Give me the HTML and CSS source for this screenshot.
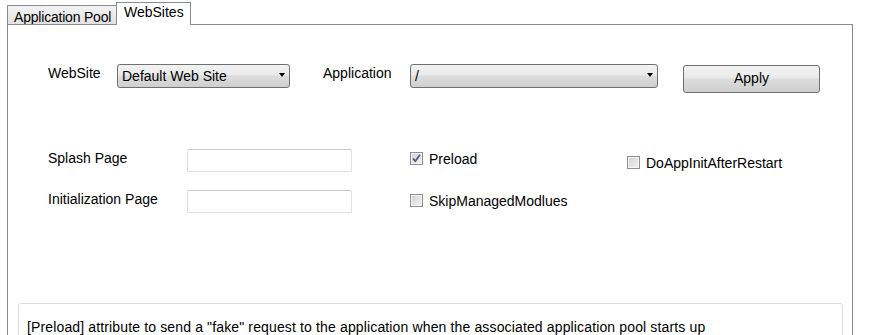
FILE: index.html
```html
<!DOCTYPE html>
<html lang="en">
<head>
    <meta charset="UTF-8">
    <title>Preload Settings</title>
    <link rel="stylesheet" href="styles.css">
</head>
<body>
    <div class="tabstrip">
        <div class="tab">Application Pool</div>
        <div class="tab tab-active">WebSites</div>
    </div>
    <div class="panel">
        <div class="top-row">
            <span class="label label-site">WebSite</span>
            <div class="combo combo-site">Default Web Site<span class="arrow"></span></div>
            <span class="label label-app">Application</span>
            <div class="combo combo-app">/<span class="arrow"></span></div>
            <button class="apply-button">Apply</button>
        </div>

        <div class="settings">
            <span class="label row-label">Splash Page</span>
            <input class="textbox" type="text">
            <label class="check check-first">
                <span class="box">
                    <svg width="11" height="11" viewBox="0 0 11 11"><path d="M2 5.5 L4.3 8 L9 1.8" fill="none" stroke="#4a5f86" stroke-width="1.8"/></svg>
                </span>
                Preload
            </label>
            <label class="check check-restart"><span class="box"></span>DoAppInitAfterRestart</label>

            <span class="label row-label">Initialization Page</span>
            <input class="textbox" type="text">
            <label class="check check-second"><span class="box"></span>SkipManagedModlues</label>
        </div>

        <div class="info-box">
            [Preload] attribute to send a "fake" request to the application when the associated application pool starts up
        </div>
    </div>
</body>
</html>
```

FILE: styles.css
```css
body {
    margin: 0;
    background-color: #ffffff;
    font-family: "Liberation Sans", Arial, sans-serif;
    font-size: 14px;
    line-height: 16px;
    color: #000000;
    overflow: hidden;
}
.tabstrip {
    display: flex;
    align-items: flex-end;
    padding: 2px 0 0 7px;
    height: 22px;
}
.tab {
    box-sizing: border-box;
    width: 109px;
    height: 19px;
    padding: 3px 0 0 6px;
    border: 1px solid #898c95;
    border-right: none;
    border-bottom: none;
    background: linear-gradient(#f3f3f3, #e2e2e2);
    white-space: nowrap;
    letter-spacing: -0.2px;
    overflow: hidden;
}
.tab-active {
    position: relative; /* sits over the panel's top line */
    z-index: 1;
    width: 75px;
    height: 23px;
    margin-bottom: -1px;
    padding: 1px 0 0 7px;
    border-right: 1px solid #898c95;
    background: #ffffff;
    letter-spacing: 0;
}
.panel {
    box-sizing: border-box;
    width: 846px;
    height: 400px;
    margin-left: 7px;
    padding-top: 39px;
    border: 1px solid #898c95;
    border-bottom: none;
}
.top-row {
    display: flex;
    align-items: flex-start;
    height: 29px;
}
.label {
    white-space: nowrap;
}
.label-site {
    width: 69px;
    margin: 1px 0 0 40px;
}
.label-app {
    width: 87px;
    margin: 1px 0 0 33px;
}
.combo {
    position: relative;
    box-sizing: border-box;
    height: 24px;
    padding: 3px 0 0 4px;
    border: 1px solid #707070;
    border-radius: 3px;
    background: linear-gradient(#f2f2f2 0%, #ebebeb 45%, #dddddd 50%, #cfcfcf 100%);
}
.combo-site {
    width: 173px;
}
.combo-app {
    width: 248px;
}
.arrow {
    position: absolute;
    right: 4px;
    top: 8px;
    width: 0;
    height: 0;
    border-left: 3.5px solid transparent;
    border-right: 3.5px solid transparent;
    border-top: 4px solid #000000;
}
.apply-button {
    box-sizing: border-box;
    width: 137px;
    height: 28px;
    margin: 1px 0 0 25px;
    padding: 4px 0 6px;
    border: 1px solid #707070;
    border-radius: 3px;
    background: linear-gradient(#f2f2f2 0%, #ebebeb 45%, #dddddd 50%, #cfcfcf 100%);
    font-family: inherit;
    font-size: 14px;
    line-height: 16px;
    color: #000000;
}
.settings {
    display: grid;
    grid-template-columns: 139px 223px 217px auto;
    grid-template-rows: 41px 41px;
    align-items: start;
    margin: 56px 0 0 40px;
}
.row-label {
    margin-top: 1px;
}
.textbox {
    box-sizing: border-box;
    width: 165px;
    height: 23px;
    margin: 0;
    border: 1px solid #dde1e6;
    border-top-color: #c5cad1;
    border-radius: 2px;
    font-family: inherit;
}
.check {
    display: flex;
    align-items: flex-start;
    gap: 6px;
    white-space: nowrap;
}
.check-first {
    margin-top: 2px;
}
.check-second {
    margin-top: 3px;
}
.check-restart {
    margin-top: 6px;
}
.box {
    box-sizing: border-box;
    display: flex;
    align-items: center;
    justify-content: center;
    width: 13px;
    height: 13px;
    margin-top: 1px;
    border: 1px solid #8e8f8f;
    box-shadow: inset 0 0 0 1px #f4f4f4;
    background: linear-gradient(135deg, #cdd0d5, #f4f4f4);
}
.info-box {
    box-sizing: border-box;
    width: 825px;
    height: 60px;
    margin: 72px 0 0 10px;
    padding: 15px 0 0 8px;
    border: 1px solid #d5dfe5;
    border-radius: 3px;
    white-space: nowrap;
    letter-spacing: 0.14px;
}
```
